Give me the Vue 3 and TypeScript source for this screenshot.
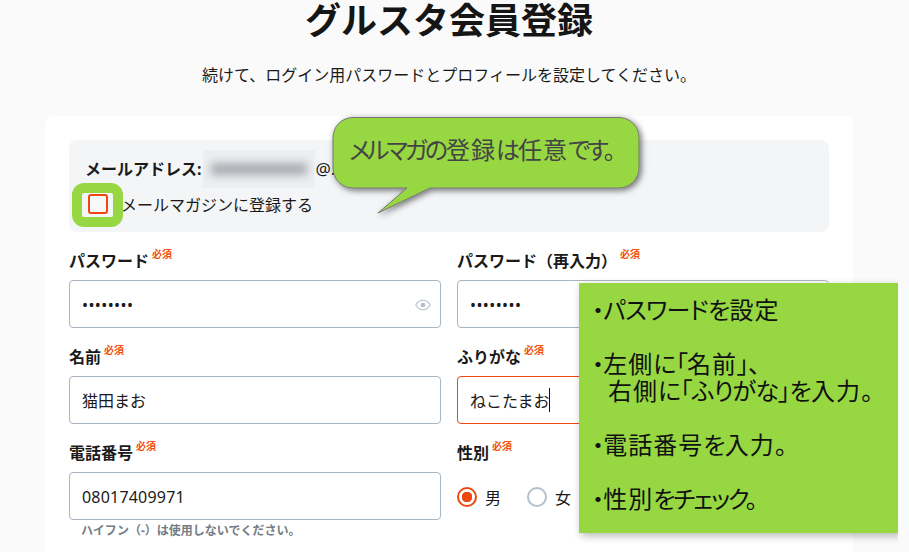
<script setup lang="ts">
interface Field {
  label: string
  value: string
  type: string
  cls?: string
  focused?: boolean
  eye?: boolean
  hint?: string
  caret?: boolean
}

const rowsLeft: Field[] = [
  { label: 'パスワード', value: 'password', type: 'password', eye: true, cls: 'pw' },
  { label: '名前', value: '猫田まお', type: 'text' },
  { label: '電話番号', value: '08017409971', type: 'text', cls: 'tel', hint: 'ハイフン（-）は使用しないでください。' },
]
const rowsRight: Field[] = [
  { label: 'パスワード（再入力）', value: 'password', type: 'password', cls: 'pw' },
  { label: 'ふりがな', value: 'ねこたまお', type: 'text', focused: true, caret: true },
]
</script>

<template>
  <div class="page">
    <h1 class="title">グルスタ会員登録</h1>
    <p class="lead">続けて、ログイン用パスワードとプロフィールを設定してください。</p>

    <main class="card">
      <section class="mailbox">
        <div class="mail-line">
          <strong>メールアドレス:</strong>
          <span class="blur"><i></i></span>
          <span class="at">@.</span>
        </div>
        <label class="check-line">
          <span class="check-ring"><span class="check"></span></span>
          <span>メールマガジンに登録する</span>
        </label>
      </section>

      <div class="grid">
        <div class="col">
          <div v-for="f in rowsLeft" :key="f.label" class="field">
            <div class="label">{{ f.label }}<sup class="req">必須</sup></div>
            <div class="input-wrap">
              <input class="input" :class="[f.cls, { focused: f.focused }]" :type="f.type" :value="f.value" readonly />
              <svg v-if="f.eye" class="eye" viewBox="0 0 16 12" width="16" height="12" fill="none" stroke="#b4bdc8" stroke-width="1.1">
                <path d="M.8 6C2.6 2.9 5 1.3 8 1.3S13.4 2.9 15.2 6C13.4 9.1 11 10.700 8 10.700S2.600 9.100.8 6Z" />
                <circle cx="8" cy="6" r="2.300" fill="#b4bdc8" stroke="none" />
              </svg>
            </div>
            <div v-if="f.hint" class="hint">{{ f.hint }}</div>
          </div>
        </div>
        <div class="col">
          <div v-for="f in rowsRight" :key="f.label" class="field">
            <div class="label">{{ f.label }}<sup class="req">必須</sup></div>
            <div class="input-wrap">
              <input class="input" :class="[f.cls, { focused: f.focused }]" :type="f.type" :value="f.value" readonly />
              <span v-if="f.caret" class="caret"></span>
            </div>
          </div>
          <div class="field">
            <div class="label">性別<sup class="req">必須</sup></div>
            <div class="radios">
              <label class="radio-item"><span class="radio on"></span>男</label>
              <label class="radio-item"><span class="radio"></span>女</label>
            </div>
          </div>
        </div>
      </div>

      <div class="bubble">
        <svg class="bubble-bg" width="340" height="130" viewBox="0 0 340 130">
          <defs>
            <filter id="bubble-shadow" x="-10%" y="-10%" width="125%" height="130%">
              <feDropShadow dx="2" dy="2" stdDeviation="3" flood-color="#000" flood-opacity="0.55" />
            </filter>
          </defs>
          <path
            d="M28 7.500H294A20 20 0 0 1 314 27.500V58A20 20 0 0 1 294 78H105L53 103L82 78H28A20 20 0 0 1 8 58V27.500A20 20 0 0 1 28 7.500Z"
            fill="#96d742"
            stroke="#777"
            stroke-width="1"
            filter="url(#bubble-shadow)"
          />
        </svg>
        <span class="bubble-text"><span class="k2">メルマガの</span>登録<span class="k2">は</span>任意<span class="k2">です。</span></span>
      </div>

      <aside class="note">
        <p><span class="k">・パスワードを</span>設定</p>
        <p class="gap"><span class="k">・</span>左側<span class="k">に「</span>名前<span class="k">」、</span></p>
        <p class="indent">右側<span class="k">に「ふりがな」を</span>入力<span class="k">。</span></p>
        <p class="gap"><span class="k">・</span>電話番号<span class="k">を</span>入力<span class="k">。</span></p>
        <p class="gap"><span class="k">・</span>性別<span class="k k3">をチェック。</span></p>
      </aside>
    </main>
  </div>
</template>

<style>
html, body { background: #fafafa; overflow: hidden; }
</style>

<style scoped>
.page {
  width: 898px;
  height: 552px;
  overflow: hidden;
  font-family: "Noto Sans", "Noto Sans CJK JP", sans-serif;
  color: #1a1a1a;
  display: flex;
  flex-direction: column;
  align-items: center;
}
.title {
  margin: 0;
  font-size: 36px;
  line-height: 42px;
  font-weight: 700;
  color: #151515;
}
.lead {
  margin: 21px 0 0;
  font-size: 16px;
  line-height: 24px;
}
.card {
  position: relative;
  margin-top: 29px;
  width: 808px;
  height: 560px;
  flex: none;
  box-sizing: border-box;
  padding: 24px;
  background: #fff;
  border-radius: 8px;
}
.mailbox {
  height: 92px;
  box-sizing: border-box;
  padding: 16px 16px 0;
  background: #f3f5f7;
  border-radius: 8px;
  font-size: 16px;
}
.mail-line {
  display: flex;
  align-items: center;
  height: 26px;
}
.mail-line strong { font-weight: 700; margin-bottom: 3px; }
.blur {
  width: 112px;
  height: 38px;
  flex: none;
  margin-left: 1px;
  background: #eceef0;
  overflow: hidden;
  display: flex;
  align-items: center;
  justify-content: center;
}
.blur i {
  display: block;
  width: 96px;
  height: 12px;
  background: #a8adb2;
  filter: blur(4px);
}
.at { margin-left: 1px; font-size: 17px; margin-bottom: 1px; }
.check-line {
  display: flex;
  align-items: center;
  gap: 12px;
  margin-top: 9px;
  height: 26px;
}
.check-ring { position: relative; width: 22px; height: 20px; flex: none; margin-left: 2px; }
.check-ring::before {
  content: "";
  position: absolute;
  left: -15px;
  top: -11px;
  width: 31px;
  height: 24px;
  border: 10px solid #96d742;
  border-radius: 12px;
}
.check {
  position: absolute;
  left: 1px;
  top: 0;
  width: 20px;
  height: 20px;
  box-sizing: border-box;
  background: #f7f8f9;
  border: 2px solid #ee4710;
  border-radius: 3px;
}
.grid {
  display: grid;
  grid-template-columns: 372px 372px;
  column-gap: 16px;
  margin-top: 16px;
}
.col { display: flex; flex-direction: column; gap: 16px; }
.field { position: relative; }
.label {
  height: 24px;
  line-height: 26px;
  margin-bottom: 8px;
  font-size: 16px;
  font-weight: 700;
  white-space: nowrap;
}
.req {
  position: relative;
  top: -2px;
  vertical-align: top;
  margin-left: 3px;
  font-size: 10px;
  line-height: 16px;
  font-weight: 700;
  color: #f2500f;
}
.input-wrap { position: relative; }
.input {
  display: block;
  width: 100%;
  height: 48px;
  box-sizing: border-box;
  padding: 0 12px;
  background: #fff;
  border: 1px solid #a9b5c3;
  border-radius: 4px;
  font: inherit;
  font-size: 16px;
  color: #1a1a1a;
  outline: none;
}
.input.pw { padding-top: 2px; letter-spacing: 0.4px; }
.input.tel { padding-top: 2px; letter-spacing: 0.2px; }
.input.focused { border-color: #ee4710; }
.eye { position: absolute; right: 10px; top: 19px; }
.caret {
  position: absolute;
  left: 92px;
  top: 12px;
  width: 1px;
  height: 24px;
  background: #111;
}
.hint {
  margin: 3px 0 0 12px;
  font-size: 12px;
  line-height: 16px;
  font-weight: 700;
  color: #757c85;
}
.radios { display: flex; align-items: center; gap: 26px; height: 50px; }
.radio-item { display: flex; align-items: center; gap: 8px; font-size: 16px; }
.radio {
  width: 20px;
  height: 20px;
  box-sizing: border-box;
  border: 2px solid #b3bfcc;
  border-radius: 50%;
  background: #fff;
}
.radio.on {
  border-color: #ee4710;
  background: radial-gradient(circle, #ee4710 0 5px, #fff 5.500px);
}
.bubble {
  position: absolute;
  left: 280px;
  top: -6px;
  width: 340px;
  height: 130px;
}
.bubble-bg { display: block; }
.bubble-text {
  position: absolute;
  left: 24px;
  top: 22px;
  line-height: 36px;
  font-size: 24px;
  letter-spacing: 1px;
  color: #444;
  white-space: nowrap;
  font-feature-settings: "palt";
}
.k2 { letter-spacing: -3px; margin-right: 1px; }
.note {
  position: absolute;
  left: 534px;
  top: 167px;
  width: 320px;
  height: 250px;
  box-sizing: border-box;
  padding: 13px 0 0 13px;
  background: #96d742;
  box-shadow: 2px 3px 8px rgba(0, 0, 0, 0.28);
  color: #111;
  font-size: 24px;
  line-height: 27px;
  letter-spacing: 1px;
  font-feature-settings: "palt";
}
.note p { margin: 0; white-space: nowrap; }
.note .gap { margin-top: 27px; }
.note .indent { padding-left: 16px; }
.k { letter-spacing: -0.700px; }
.k3 { letter-spacing: -2px; }
</style>
